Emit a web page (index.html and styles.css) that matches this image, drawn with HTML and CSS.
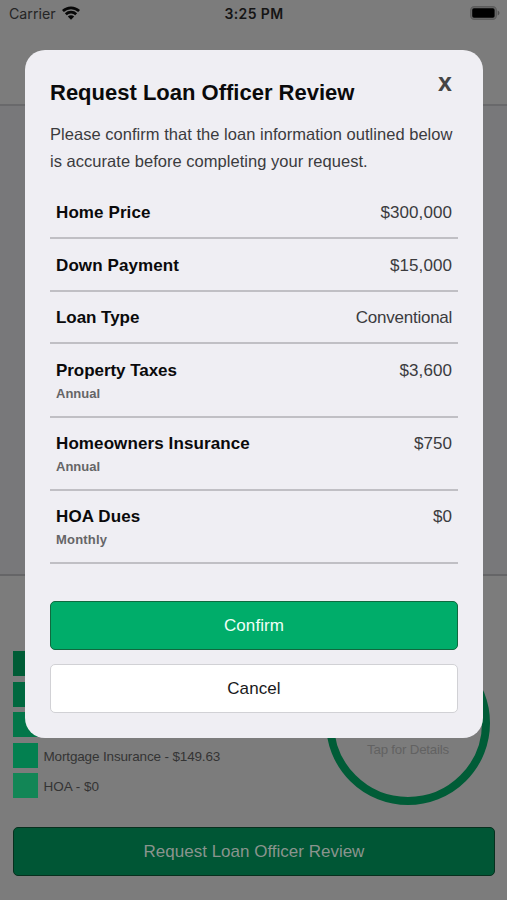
FILE: index.html
```html
<!DOCTYPE html>
<html lang="en">
<head>
<meta charset="utf-8">
<title>Request Loan Officer Review</title>
<link rel="stylesheet" href="styles.css">
</head>
<body>
<div class="screen">
  <header class="status">
    <div class="carrier"><span>Carrier</span>
      <svg class="wifi" viewBox="0 0 18 14" width="18" height="14"><g fill="none" stroke="#080808" stroke-width="2.7"><path d="M.9 5C5.5.7 12.5.7 17.1 5"/><path d="M3.8 8.2c2.9-2.8 7.5-2.8 10.4 0"/></g><path d="M5.8 10.5c1.8-1.6 4.6-1.6 6.4 0l-3.2 3.2z" fill="#080808"/></svg>
    </div>
    <span class="time">3:25 PM</span>
    <svg class="battery" viewBox="0 0 30 15" width="30" height="15"><rect x=".6" y=".6" width="25.8" height="12.8" rx="3.8" fill="#686868" stroke="#5c5c5c" stroke-width="1.1"/><rect x="2.2" y="2.3" width="22.4" height="9.4" rx="1.8" fill="#000"/><path d="M27.7 4.6c2.3.9 2.3 4 0 4.9z" fill="#505050"/></svg>
  </header>
  <div class="nav"></div>
  <div class="panel"></div>
  <main class="summary">
    <div class="breakdown">
      <ul class="legend">
        <li><i class="swatch s1"></i></li>
        <li><i class="swatch s2"></i></li>
        <li><i class="swatch s3"></i></li>
        <li><i class="swatch s4"></i><span class="mi">Mortgage Insurance - $149.63</span></li>
        <li><i class="swatch s5"></i><span class="hoa">HOA - $0</span></li>
      </ul>
      <div class="ring"><span>Tap for Details</span></div>
    </div>
    <div class="button request"><span>Request Loan Officer Review</span></div>
  </main>
</div>
<section class="modal">
  <div class="heading"><h1>Request Loan Officer Review</h1><span class="close">x</span></div>
  <p class="intro"><span class="l1">Please confirm that the loan information outlined below</span><br><span class="l2">is accurate before completing your request.</span></p>
  <div class="rows">
    <div class="row"><div><b>Home Price</b></div><span>$300,000</span></div>
    <div class="row"><div><b>Down Payment</b></div><span>$15,000</span></div>
    <div class="row"><div><b class="tight">Loan Type</b></div><span class="conv">Conventional</span></div>
    <div class="row tall"><div><b class="tight">Property Taxes</b><small>Annual</small></div><span>$3,600</span></div>
    <div class="row tall"><div><b>Homeowners Insurance</b><small>Annual</small></div><span>$750</span></div>
    <div class="row tall"><div><b>HOA Dues</b><small class="monthly">Monthly</small></div><span>$0</span></div>
  </div>
  <div class="button confirm">Confirm</div>
  <div class="button cancel">Cancel</div>
</section>
</body>
</html>
```
FILE: styles.css
```css
* { box-sizing: border-box; }
body { margin: 0; font-family: "Liberation Sans", Arial, sans-serif; background: #7c7c7c; }
.screen { height: 900px; display: flex; flex-direction: column; overflow: hidden; }
.status { height: 28px; display: grid; grid-template-columns: 1fr auto 1fr; align-items: center; padding: 0 7px 0 9px; flex: none; }
.carrier { display: flex; align-items: center; gap: 6px; font: 14.2px/28px Inter, sans-serif; color: #252525; }
.wifi { margin-top: -2px; }
.time { font: 600 14px/28px Inter, sans-serif; color: #151515; letter-spacing: .4px; margin-left: -1px; }
.battery { justify-self: end; margin-top: -1px; }
.nav { height: 78px; border-bottom: 2px solid #69696b; flex: none; }
.panel { height: 470px; background: #78787a; border-bottom: 2px solid #656567; flex: none; }
.summary { padding: 62px 12px 0 13px; }
.breakdown { display: flex; justify-content: space-between; padding-right: 5px; }
.legend { list-style: none; margin: 13px 0 0; padding: 0; display: flex; flex-direction: column; gap: 5.6px; }
.legend li { display: flex; height: 25px; align-items: center; gap: 5.5px; font-size: 13.5px; color: #343434; white-space: nowrap; }
.legend span { padding-top: 2px; }
.mi { letter-spacing: -.15px; }
.swatch { width: 25px; height: 25px; }
.s1 { background: #005c36; }
.s2 { background: #00683f; }
.s3 { background: #037649; }
.s4 { background: #038050; }
.s5 { background: #128656; }
.ring { width: 164px; height: 164px; margin-top: 3px; border: 8px solid #005c37; border-radius: 50%; text-align: center; padding-top: 93px; font-size: 13.3px; letter-spacing: -.2px; line-height: 16px; color: #626262; white-space: nowrap; }
.button { height: 49px; border-radius: 5px; border: 1.5px solid; display: flex; align-items: center; justify-content: center; font-size: 17px; }
.request { margin-top: 22px; background: #005635; border-color: #07301e; color: #8a948e; }
.modal { position: absolute; left: 25px; top: 50px; width: 458px; height: 688px; border-radius: 20px; background: #efeef3; padding: 24px 25px 0; color: #3b3b3e; }
.heading { display: flex; justify-content: space-between; height: 47px; }
h1 { margin: 6px 0 0; font-size: 22px; line-height: 26px; color: #0a0a0b; white-space: nowrap; }
.close { font: 700 25px/20px "Liberation Sans", Arial, sans-serif; color: #454545; padding-right: 6px; margin-top: -2px; }
.intro { margin: 0; font-size: 16.5px; line-height: 27px; white-space: nowrap; letter-spacing: .03px; }
.rows { margin-top: 11.5px; }
.row { height: 52.6px; border-bottom: 2px solid #c0bfc4; padding: 16.5px 6px 0; display: flex; justify-content: space-between; font-size: 17px; line-height: 20px; }
.row > span { letter-spacing: .1px; margin-right: -.1px; }
.row > .conv { letter-spacing: -.25px; }
.row b { display: block; color: #0a0a0b; letter-spacing: .1px; }
.row b.tight { letter-spacing: -.05px; }
.row small { display: block; font-size: 13px; line-height: 16px; font-weight: 700; color: #656567; margin-top: 5px; }
.row small.monthly { letter-spacing: .2px; }
.tall { height: 73.3px; }
.confirm { margin-top: 36.5px; padding-top: 1px; background: #00ad6a; border-color: #10693f; color: #f0fff7; letter-spacing: .1px; }
.cancel { margin-top: 14.5px; padding-top: 1px; background: #fff; border-color: #d1d1d5; color: #19191b; letter-spacing: .1px; }
```
